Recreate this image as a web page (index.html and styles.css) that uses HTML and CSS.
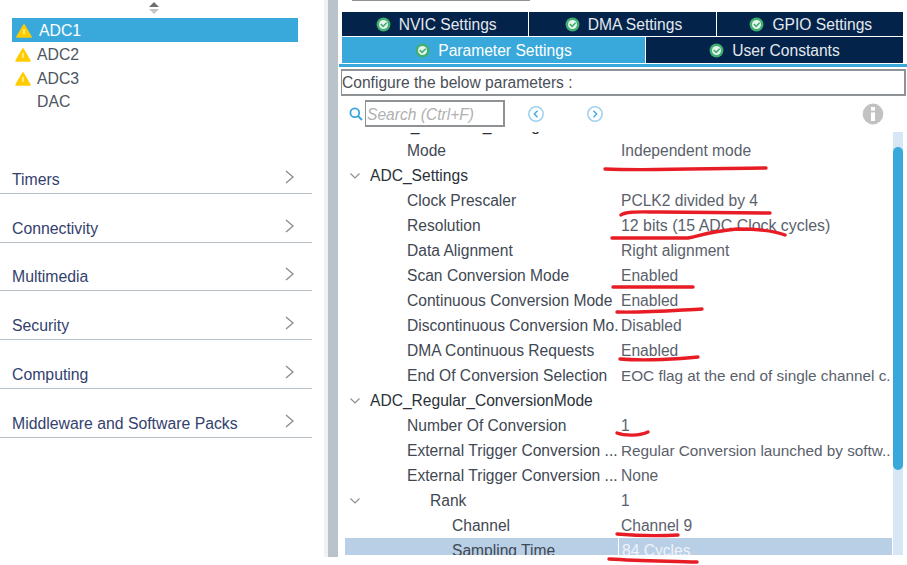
FILE: index.html
```html
<!DOCTYPE html>
<html lang="en">

<head>
  <meta charset="UTF-8" />
  <meta name="viewport" content="width=device-width, initial-scale=1.0" />
  <title>ADC1 Configuration</title>

  <link rel="stylesheet" href="styles.css">
</head>

<body>
  <svg class="defs" width="0" height="0">
    <symbol id="warn" viewBox="0 0 16 14">
      <path d="M8 1 L15 13 H1 Z" fill="#ffcc00" stroke="#ffcc00" stroke-width="1.6" stroke-linejoin="round" />
      <path d="M8 5 V10" stroke="#fff3c0" stroke-width="1.4" />
    </symbol>
    <symbol id="ok" viewBox="0 0 16 16">
      <circle cx="8" cy="8" r="7.4" fill="#3fae70" />
      <circle cx="8" cy="8" r="4.8" fill="#e6f5ec" />
      <path d="M5 7.4 L7.6 10 L11.4 6.2" fill="none" stroke="#3fae70" stroke-width="1.6" />
    </symbol>
    <symbol id="chev" viewBox="0 0 9 14">
      <path d="M1 1 L8 7 L1 13" fill="none" stroke="#8c8c8c" stroke-width="1.3" />
    </symbol>
    <symbol id="twist" viewBox="0 0 10 6">
      <path d="M0.5 0.5 L5 5 L9.5 0.5" fill="none" stroke="#8c9096" stroke-width="1.2" />
    </symbol>
  </svg>

  <div id="app">
    <div class="sidebar">
      <svg class="sort-arrows" width="12" height="14" viewBox="0 0 12 14">
        <path d="M6 1 L11 6 H1 Z" fill="#6e6e6e" />
        <path d="M1 8 H11 L6 13 Z" fill="#c4c4c4" />
      </svg>

      <ul class="periph-list">
        <li class="periph selected"><svg class="warn"><use href="#warn" /></svg>ADC1</li>
        <li class="periph"><svg class="warn"><use href="#warn" /></svg>ADC2</li>
        <li class="periph"><svg class="warn"><use href="#warn" /></svg>ADC3</li>
        <li class="periph last"><span class="warn"></span>DAC</li>
      </ul>

      <div class="categories">
        <div class="category">Timers<svg class="chev"><use href="#chev" /></svg></div>
        <div class="category">Connectivity<svg class="chev"><use href="#chev" /></svg></div>
        <div class="category">Multimedia<svg class="chev"><use href="#chev" /></svg></div>
        <div class="category">Security<svg class="chev"><use href="#chev" /></svg></div>
        <div class="category">Computing<svg class="chev"><use href="#chev" /></svg></div>
        <div class="category">Middleware and Software Packs<svg class="chev"><use href="#chev" /></svg></div>
      </div>
    </div>

    <div class="splitter"></div>

    <div class="panel">
      <div class="stub"></div>

      <div class="tabs tabs-top">
        <div class="tab"><svg class="ok"><use href="#ok" /></svg>NVIC Settings</div>
        <div class="tab"><svg class="ok"><use href="#ok" /></svg>DMA Settings</div>
        <div class="tab"><svg class="ok"><use href="#ok" /></svg>GPIO Settings</div>
      </div>
      <div class="tabs tabs-bottom">
        <div class="tab active"><svg class="ok"><use href="#ok" /></svg>Parameter Settings</div>
        <div class="tab"><svg class="ok"><use href="#ok" /></svg>User Constants</div>
      </div>
      <div class="tab-rule"></div>

      <div class="configure">Configure the below parameters :</div>

      <div class="search-row">
        <svg class="search-icon" width="14" height="14" viewBox="0 0 14 14">
          <circle cx="5.8" cy="5.8" r="4.4" fill="none" stroke="#3aa8dc" stroke-width="1.8" />
          <path d="M9 9 L13 13" stroke="#3aa8dc" stroke-width="2" />
        </svg>
        <div class="search-box">Search (Ctrl+F)</div>
        <svg class="nav-btn" width="18" height="18" viewBox="0 0 18 18">
          <circle cx="9" cy="9" r="7.2" fill="none" stroke="#9fd3ee" stroke-width="1.6" />
          <path d="M10.5 5.8 L7.3 9 L10.5 12.2" fill="none" stroke="#3aa8dc" stroke-width="1.3" />
        </svg>
        <svg class="nav-btn" width="18" height="18" viewBox="0 0 18 18">
          <circle cx="9" cy="9" r="7.2" fill="none" stroke="#9fd3ee" stroke-width="1.6" />
          <path d="M7.5 5.8 L10.7 9 L7.5 12.2" fill="none" stroke="#3aa8dc" stroke-width="1.3" />
        </svg>
        <svg class="info" width="22" height="22" viewBox="0 0 22 22">
          <circle cx="11" cy="11" r="10.4" fill="#c2c2c2" />
          <rect x="9" y="9.4" width="4" height="8.6" fill="#fff" />
          <rect x="9" y="4" width="4" height="3.6" fill="#fff" />
        </svg>
      </div>

      <div class="params">
        <div class="param-list">
          <div class="row cut"><span class="name group">ADCs_Common_Settings</span><span class="value"></span></div>
          <div class="row"><span class="name lvl1">Mode</span><span class="value">Independent mode</span></div>
          <div class="row"><span class="name group"><svg class="twist"><use href="#twist" /></svg>ADC_Settings</span><span class="value"></span></div>
          <div class="row"><span class="name lvl1">Clock Prescaler</span><span class="value">PCLK2 divided by 4</span></div>
          <div class="row"><span class="name lvl1">Resolution</span><span class="value wide">12 bits (15 ADC Clock cycles)</span></div>
          <div class="row"><span class="name lvl1">Data Alignment</span><span class="value">Right alignment</span></div>
          <div class="row"><span class="name lvl1">Scan Conversion Mode</span><span class="value">Enabled</span></div>
          <div class="row"><span class="name lvl1">Continuous Conversion Mode</span><span class="value">Enabled</span></div>
          <div class="row"><span class="name lvl1">Discontinuous Conversion Mo.</span><span class="value">Disabled</span></div>
          <div class="row"><span class="name lvl1">DMA Continuous Requests</span><span class="value">Enabled</span></div>
          <div class="row"><span class="name lvl1">End Of Conversion Selection</span><span class="value long">EOC flag at the end of single channel c.</span></div>
          <div class="row"><span class="name group"><svg class="twist"><use href="#twist" /></svg>ADC_Regular_ConversionMode</span><span class="value"></span></div>
          <div class="row"><span class="name lvl1">Number Of Conversion</span><span class="value">1</span></div>
          <div class="row"><span class="name lvl1">External Trigger Conversion ...</span><span class="value long">Regular Conversion launched by softw..</span></div>
          <div class="row"><span class="name lvl1">External Trigger Conversion ...</span><span class="value">None</span></div>
          <div class="row"><span class="name rank"><svg class="twist"><use href="#twist" /></svg>Rank</span><span class="value">1</span></div>
          <div class="row"><span class="name lvl2">Channel</span><span class="value">Channel 9</span></div>
          <div class="row selected"><span class="name lvl2">Sampling Time</span><span class="value">84 Cycles</span></div>
        </div>
        <div class="scrollbar"><div class="thumb"></div></div>
      </div>
    </div>
  </div>

  <!-- red pen marks drawn over the screenshot -->
  <svg class="marks" width="907" height="565" viewBox="0 0 907 565">
    <path d="M605 169 C650 171 720 168 766 168" />
    <path d="M621 215 C626 211 640 212 660 212 L770 213" />
    <path d="M612 238 L688 238 C700 236 705 232 737 229 C755 229 775 231 785 235" />
    <path d="M613 287 L693 287" />
    <path d="M617 312 C645 313 680 310 702 309" />
    <path d="M620 359 C645 361 680 359 698 357" />
    <path d="M617 433 C625 436 640 436 648 432" />
    <path d="M617 534 C640 536 660 536 678 535" />
    <path d="M609 559 C640 561 670 561 697 562" />
  </svg>
</body>

</html>
```

FILE: styles.css
```css
* {
  box-sizing: border-box;
}

html,
body {
  margin: 0;
  height: 100%;
  background: #fff;
  overflow: hidden;
}

body {
  font-family: "Liberation Sans", Arial, sans-serif;
  font-size: 15.6px;
  color: #434a55;
}

.defs {
  display: block;
  height: 0;
}

#app {
  display: flex;
  height: 557px;
}

/* left column */
.sidebar {
  width: 324px;
  flex: none;
}

.sort-arrows {
  display: block;
  margin: 1px 0 3px 148px;
}

.periph-list {
  list-style: none;
  margin: 0 0 0 12px;
  padding: 0;
  width: 286px;
}

.periph {
  display: flex;
  align-items: center;
  height: 24px;
  padding: 1px 0 0 3px;
  font-size: 15.8px;
  color: #4d5560;
}

.periph.last {
  padding-top: 0;
}

.periph.selected {
  background: #39a9dc;
  color: #fff;
  padding-left: 4px;
}

.periph.selected .warn {
  margin-right: 7px;
}

.warn {
  width: 16px;
  height: 14px;
  margin-right: 6px;
  flex: none;
}

.categories {
  margin-top: 31px;
}

.category {
  display: flex;
  align-items: flex-end;
  justify-content: space-between;
  width: 312px;
  height: 48.8px;
  padding: 0 18px 4px 12px;
  border-bottom: 1px solid #b7c0c6;
  font-size: 15.8px;
  color: #33416e;
}

.chev {
  width: 9px;
  height: 14px;
  margin-bottom: 5px;
}

.splitter {
  width: 14px;
  flex: none;
  border-left: 4px solid #eff1f2;
  background: #b9c3c9;
}

/* right column */
.panel {
  flex: 1;
  min-width: 0;
  padding-left: 1px;
}

.stub {
  width: 178px;
  height: 1px;
  margin-left: 13px;
  background: #8e9295;
}

.tabs {
  display: flex;
  width: 561px;
  margin-left: 3px;
  background: #fff;
}

.tabs-top {
  height: 24px;
  margin-top: 11px;
  gap: 1px;
}

.tabs-bottom {
  height: 26px;
  margin-top: 1px;
  gap: 1px;
}

.tab {
  flex: 1;
  display: flex;
  align-items: center;
  justify-content: center;
  padding: 2px 0 0 2px;
  background: #03234b;
  color: #e4e9ee;
}

.tabs-bottom .tab {
  flex: 257;
  padding-left: 0;
}

.tabs-bottom .tab.active {
  flex: 303;
  background: #39a9dc;
  color: #fff;
}

.ok {
  width: 15px;
  height: 15px;
  margin: -1px 8px 0 0;
  flex: none;
}

.tab-rule {
  height: 3px;
  margin-top: 1px;
  background: #39a9dc;
}

.configure {
  display: flex;
  align-items: center;
  height: 27px;
  margin: 2px 1px 0 2px;
  border: 2px solid #8e9295;
  border-left-width: 1px;
  color: #4a4f58;
}

.search-row {
  display: flex;
  align-items: center;
  height: 36px;
  padding: 4px 0 5px 10px;
}

.search-icon {
  flex: none;
  margin-right: 2px;
}

.search-box {
  width: 140px;
  height: 27px;
  padding-left: 1px;
  line-height: 25px;
  border: 1px solid #8e9295;
  border-width: 2px 2px 2px 1px;
  font-style: italic;
  color: #b0b0b0;
}

.nav-btn {
  flex: none;
  margin-left: 22px;
}

.nav-btn + .nav-btn {
  margin-left: 41px;
}

.info {
  margin-left: 258px;
  flex: none;
}

/* parameter table */
.params {
  display: flex;
  height: 423px;
  margin-left: 6px;
  overflow: hidden;
}

.param-list {
  width: 547px;
  flex: none;
}

.row {
  display: grid;
  grid-template-columns: 276px 1fr;
  height: 25px;
  line-height: 25px;
}

.row.cut {
  margin-top: -19px;
}

.name,
.value {
  display: block;
  white-space: nowrap;
  overflow: hidden;
}

.name {
  color: #3f4853;
}

.group {
  padding-left: 25px;
  color: #2b3138;
}

.row .group .twist {
  margin-left: -20px;
  margin-right: 10px;
}

.lvl1 {
  padding-left: 62px;
}

.lvl2 {
  padding-left: 107px;
}

.rank {
  padding-left: 85px;
}

.row .rank .twist {
  margin-left: -80px;
  margin-right: 70px;
}

.twist {
  width: 10px;
  height: 6px;
  vertical-align: 2px;
}

.value {
  color: #5a616b;
}

.value.wide {
  font-size: 15.9px;
}

.value.long {
  font-size: 15.3px;
}

.row.selected {
  background: #b8cfe6;
}

.row.selected .value {
  margin-left: -3px;
  padding-left: 3px;
  border-left: 1px solid #fff;
  color: #eef4fa;
}

.scrollbar {
  width: 10px;
  margin-left: 1px;
  flex: none;
  padding-top: 15px;
  background: #d6e6f5;
}

.thumb {
  height: 323px;
  border-radius: 5px;
  background: #39a9dc;
}

.marks {
  position: absolute;
  left: 0;
  top: 0;
  fill: none;
  stroke: #e81c24;
  stroke-width: 3.4;
  stroke-linecap: round;
  pointer-events: none;
}
```
